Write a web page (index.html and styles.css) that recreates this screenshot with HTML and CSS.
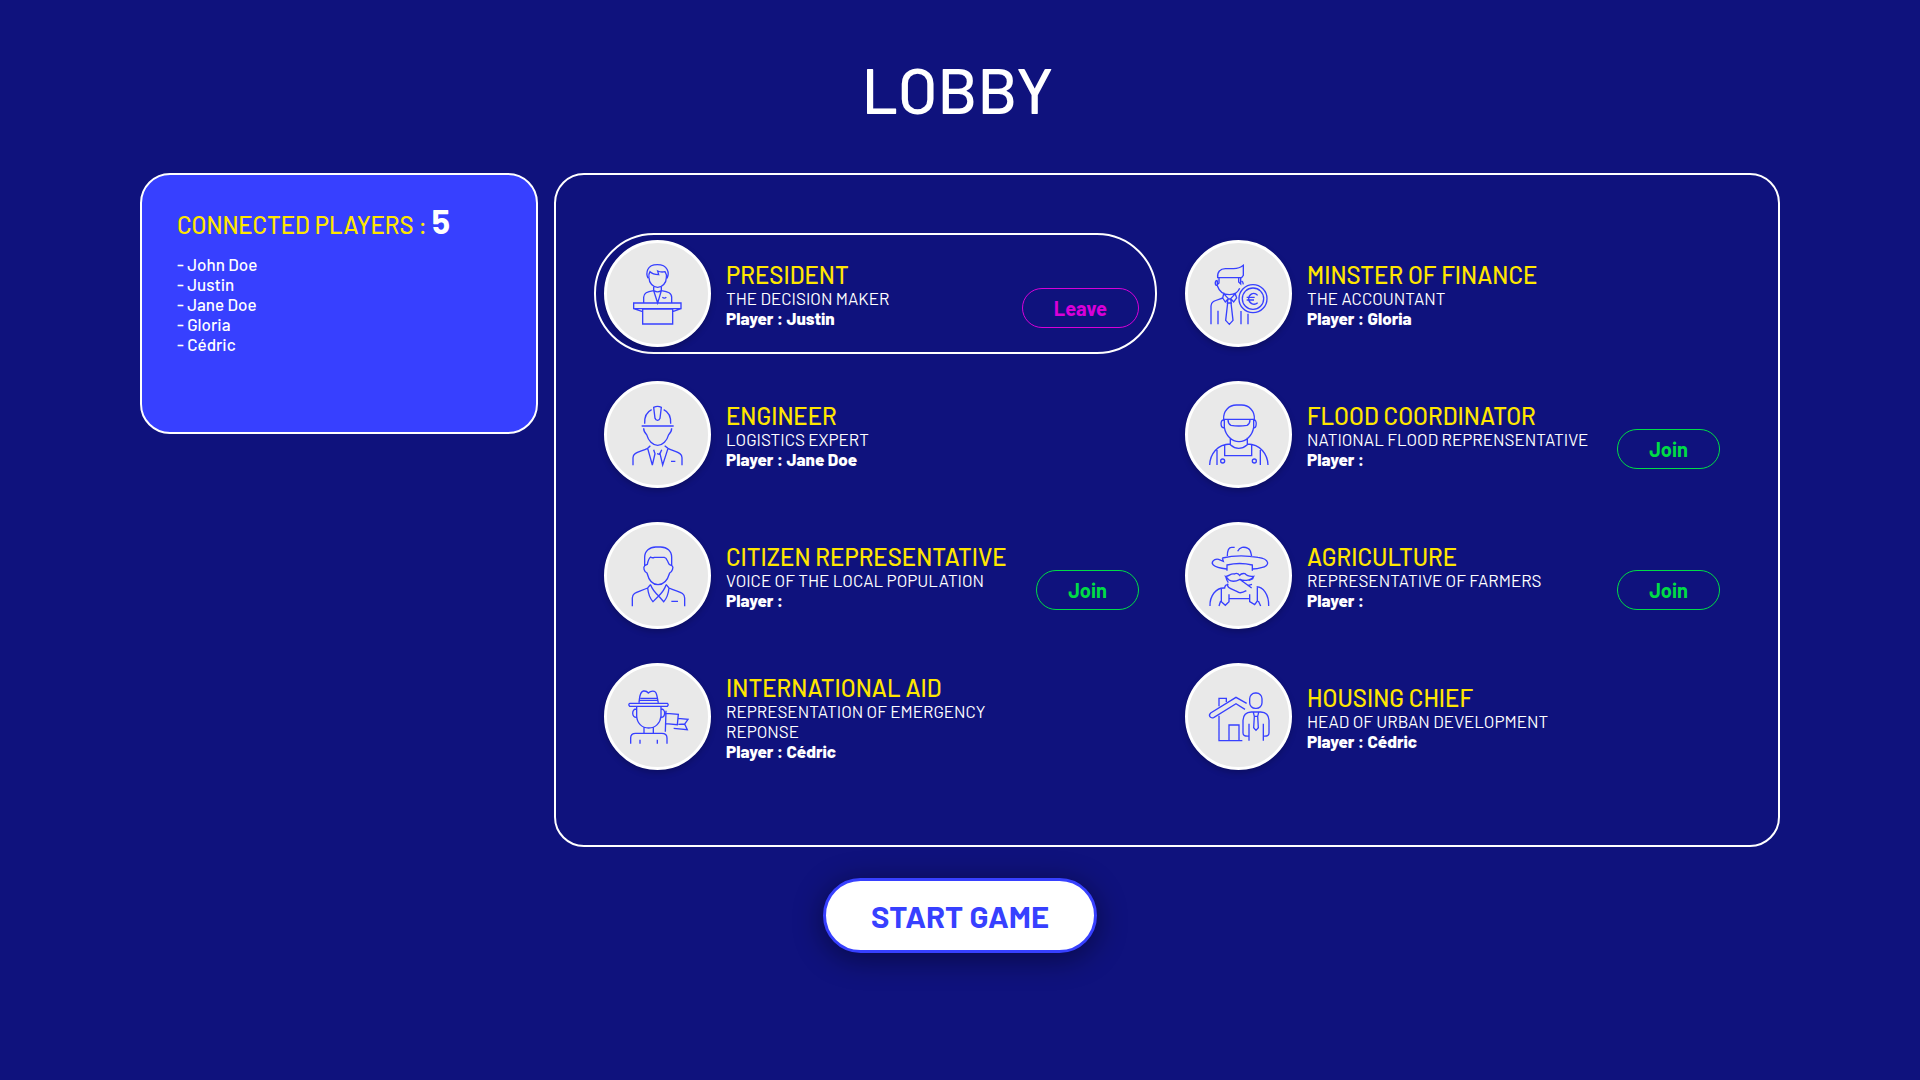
FILE: index.html
```html
<!DOCTYPE html>
<html lang="en">
<head>
<meta charset="utf-8">
<meta name="viewport" content="width=device-width, initial-scale=1">
<title>Lobby</title>
<link rel="stylesheet" href="styles.css">
</head>
<body>
<main class="page">
  <h1 class="page-title">LOBBY</h1>
  <div class="lobby">
    <aside class="players">
      <h2 class="players-title">CONNECTED PLAYERS : <strong class="players-count">5</strong></h2>
      <ul class="players-list">
        <li>- John Doe</li>
        <li>- Justin</li>
        <li>- Jane Doe</li>
        <li>- Gloria</li>
        <li>- Cédric</li>
      </ul>
    </aside>
    <section class="roles">
      <article class="role role-selected">
        <div class="avatar">
          <svg class="icon" viewBox="113 115 180 180" aria-hidden="true">
            <path d="M173 158C166 142 169 117 201 117S238 142 230 158M176 156C176 172 188 185 202 185S228 172 228 156C230 148 226 141 224 138Q212 141 202 136L205 147Q187 146 179 138Q174 146 176 156M190 184V195L202 232L213 195V184M190 195Q202 202 213 195M190 195C170 198 160 202 160 215V232M213 195C234 198 244 202 244 215V232M130 232H272V249H130ZM130 249L157 258M272 249L247 258M157 250H247V295H157ZM216 215Q222 220 228 215"/>
          </svg>
        </div>
        <div class="role-text">
          <h3 class="role-name">PRESIDENT</h3>
          <p>THE DECISION MAKER</p>
          <p class="role-player">Player : Justin</p>
        </div>
        <button class="pill pill-leave" type="button">Leave</button>
      </article>
      <article class="role">
        <div class="avatar">
          <svg class="icon" viewBox="116 115 180 180" aria-hidden="true">
            <path d="M142 156C140 139 150 129 165 129H190Q207 129 219 119V149L214 156ZM146 157V172L141 177V166M142 164C132 164 133 180 141 180C146 195 158 207 177 207C193 207 204 198 208 188M205 157V169L211 175V157M214 166Q218 168 219 176M161 201L157 217L165 229L173 220H182L190 229L199 217L194 203M162 206L174 219M193 206L181 219M157 217C137 224 122 226 122 241V296M143 255V296M212 256V296M233 264V296M173 220L171 232H183L181 220M172 232L166 284L177 296L188 284L182 232"/>
            <circle cx="248" cy="219" r="42"/><circle cx="248" cy="219" r="32"/>
            <path d="M262 209C250 196 235 207 235 219S250 242 262 231M229 215H253M229 223H251"/>
          </svg>
        </div>
        <div class="role-text">
          <h3 class="role-name">MINSTER OF FINANCE</h3>
          <p>THE ACCOUNTANT</p>
          <p class="role-player">Player : Gloria</p>
        </div>
      </article>
      <article class="role">
        <div class="avatar">
          <svg class="icon" viewBox="113 118 180 180" aria-hidden="true">
            <path d="M154 181H250M163 174C162 153 169 139 184 132M241 174C242 153 235 139 220 132M190 125Q202 119 213 125L209 158Q207 164 202 164Q196 164 194 158ZM160 188Q160 199 169 207C174 225 187 239 202 239S230 225 235 207Q244 199 244 188M180 240L172 248C145 260 128 261 128 276V299M223 240L233 248C259 260 275 261 275 276V299M172 248L186 298L194 264L190 252M233 248L217 298L209 264L214 252M200 264L206 266L209 262M242 287H255"/>
          </svg>
        </div>
        <div class="role-text">
          <h3 class="role-name">ENGINEER</h3>
          <p>LOGISTICS EXPERT</p>
          <p class="role-player">Player : Jane Doe</p>
        </div>
      </article>
      <article class="role">
        <div class="avatar">
          <svg class="icon" viewBox="116 118 180 180" aria-hidden="true">
            <path d="M160 161C158 135 177 118 198 118H214C235 118 254 135 252 161ZM173 162Q173 174 182 179Q205 183 230 179Q239 174 239 162M161 163C149 161 149 187 162 187M251 163C260 161 260 187 250 187M162 163V185C166 209 184 228 206 228S246 209 250 185V163M180 216V237Q205 259 231 237V216M180 235C141 235 119 266 118 298M231 235C270 235 292 266 293 298M163 239V270H244V239M140 253V298M270 253V298"/>
            <circle cx="157" cy="286" r="6"/><circle cx="252" cy="286" r="6"/>
          </svg>
        </div>
        <div class="role-text">
          <h3 class="role-name">FLOOD COORDINATOR</h3>
          <p>NATIONAL FLOOD REPRENSENTATIVE</p>
          <p class="role-player">Player :</p>
        </div>
        <button class="pill pill-join" type="button">Join</button>
      </article>
      <article class="role">
        <div class="avatar">
          <svg class="icon" viewBox="113 121 180 180" aria-hidden="true">
            <path d="M163 180V155C163 136 178 124 196 124H211C230 124 244 136 244 155V180M163 180L171 176C173 165 176 158 181 154Q186 158 192 155H222Q229 157 229 162C234 168 234 175 238 177L246 181M163 180C158 185 161 198 170 202C176 226 188 237 203 237S231 226 238 202C246 198 250 185 246 181M181 236L172 247C144 260 126 259 126 277V302M227 236L236 247C264 260 283 259 283 277V302M181 238Q187 254 205 271L188 288Q175 275 172 247M227 238Q222 254 205 271L220 288Q233 275 236 247M243 287H263"/>
          </svg>
        </div>
        <div class="role-text">
          <h3 class="role-name">CITIZEN REPRESENTATIVE</h3>
          <p>VOICE OF THE LOCAL POPULATION</p>
          <p class="role-player">Player :</p>
        </div>
        <button class="pill pill-join" type="button">Join</button>
      </article>
      <article class="role">
        <div class="avatar">
          <svg class="icon" viewBox="116 121 180 180" aria-hidden="true">
            <path d="M171 151C171 136 175 125 184 125H193M202 137C208 124 221 122 233 128C242 132 241 141 244 151M156 157Q205 145 263 155C297 159 302 181 273 186Q261 190 247 190M156 157L159 167L145 161C130 158 121 171 129 178C137 186 153 188 169 190M170 195V178Q208 169 246 178V195M166 212C176 213 180 202 192 205Q201 200 208 209Q213 202 224 204C230 212 240 213 250 212C240 228 217 225 209 221Q188 232 175 222ZM166 212Q169 225 174 231M250 212L247 219L236 224M210 222L244 247M232 240L245 236M173 234C166 248 189 251 205 260Q212 264 228 255M174 237Q164 236 163 247C137 245 118 271 119 301M153 250V288L165 299L176 288V266M146 301L151 286M261 243V286L253 297L238 288V266M177 279H238M259 243C278 244 296 266 295 301M264 286L271 301"/>
          </svg>
        </div>
        <div class="role-text">
          <h3 class="role-name">AGRICULTURE</h3>
          <p>REPRESENTATIVE OF FARMERS</p>
          <p class="role-player">Player :</p>
        </div>
        <button class="pill pill-join" type="button">Join</button>
      </article>
      <article class="role">
        <div class="avatar">
          <svg class="icon" viewBox="113 118 180 180" aria-hidden="true">
            <path d="M118 167H231Q236 171 231 176H118Q113 171 118 167M146 165C148 151 147 133 159 130Q169 129 174 136Q181 129 192 131C201 133 200 151 204 165M150 152H200M148 158H202M139 178V205C140 226 154 241 175 241S210 226 212 205V178M139 184C123 182 123 212 140 209M212 184C226 183 227 208 212 209M161 240V256M189 240V256M121 288V271Q121 257 136 257H214Q230 257 230 271V288M149 276V288M201 276V288M227 189L225 252M228 197L264 200L261 231L227 228M262 212L293 215L283 229L291 246L250 242M264 230L283 229"/>
          </svg>
        </div>
        <div class="role-text">
          <h3 class="role-name">INTERNATIONAL AID</h3>
          <p>REPRESENTATION OF EMERGENCY REPONSE</p>
          <p class="role-player">Player : Cédric</p>
        </div>
      </article>
      <article class="role">
        <div class="avatar">
          <svg class="icon" viewBox="116 118 180 180" aria-hidden="true">
            <path d="M146 176V152H168V163M229 167L197 149L121 196C113 204 120 213 130 210L197 168L224 185M146 204V279H216M176 279V232H206V279M236 228V279M279 228V279M236 265Q218 267 218 256V218Q219 194 243 193H271Q295 194 296 218V256Q296 267 279 265M249 194L252 206H262L265 194M252 206L250 240L257 248L264 240L262 206"/>
            <rect x="238" y="136" width="37" height="46" rx="17"/>
          </svg>
        </div>
        <div class="role-text">
          <h3 class="role-name">HOUSING CHIEF</h3>
          <p>HEAD OF URBAN DEVELOPMENT</p>
          <p class="role-player">Player : Cédric</p>
        </div>
      </article>
    </section>
  </div>
  <button class="start" type="button">START GAME</button>
</main>
</body>
</html>
```
FILE: styles.css
```css
* {
  box-sizing: border-box;
}

body {
  margin: 0;
  min-height: 100vh;
  background: #0f127d;
  color: #fff;
  font-family: Barlow, Roboto, sans-serif;
  font-size: 17px;
  line-height: 20px;
}

h1, h2, h3, p, ul {
  margin: 0;
  padding: 0;
  font-weight: 400;
}

button {
  font-family: inherit;
  cursor: pointer;
}

.page {
  display: flex;
  flex-direction: column;
  align-items: center;
  padding: 49px 140px;
}

.page-title {
  margin-right: 5px;
  font-size: 64px;
  font-weight: 500;
  line-height: 80px;
}

.lobby {
  display: grid;
  grid-template-columns: 398fr 1226fr;
  gap: 16px;
  align-items: start;
  width: 100%;
  margin-top: 44px;
}

.players {
  min-height: 261px;
  padding: 26px 35px;
  border: 2px solid #fff;
  border-radius: 30px;
  background: #3740ff;
}

.players-title {
  color: #ffe600;
  font-size: 24px;
  font-weight: 500;
  line-height: 40px;
}

.players-count {
  color: #fff;
  font-size: 34px;
  font-weight: 700;
}

.players-list {
  margin-top: 9px;
  font-weight: 500;
  list-style: none;
}

.roles {
  display: grid;
  grid-template-columns: 1fr 1fr;
  gap: 20px 18px;
  padding: 58px 40px 68px 38px;
  border: 2px solid #fff;
  border-radius: 30px;
}

.role {
  display: flex;
  align-items: center;
  min-height: 121px;
  padding: 5px 16px 5px 8px;
  border: 2px solid transparent;
  border-radius: 60px;
}

.role-selected {
  border-color: #fff;
}

.avatar {
  display: flex;
  flex: none;
  align-items: center;
  justify-content: center;
  width: 107px;
  height: 107px;
  border: 3px solid #fff;
  border-radius: 50%;
  background: #e9e9e9;
  box-shadow: 0 3px 6px rgba(0, 0, 0, 0.2);
}

.icon {
  width: 60px;
  height: 60px;
  overflow: visible;
  fill: none;
  stroke: #3740ff;
  stroke-width: 4;
}

.role-text {
  max-width: 300px;
  margin-left: 15px;
}

.role-name {
  padding-top: 2px;
  color: #ffe600;
  font-size: 24px;
  font-weight: 500;
  line-height: 26px;
}

.role-player {
  font-weight: 800;
}

.pill {
  align-self: flex-end;
  height: 40px;
  margin: 0 0 19px auto;
  padding: 0 31px;
  border: 1px solid;
  border-radius: 20px;
  background: transparent;
  font-size: 20px;
  font-weight: 700;
}

.pill-leave {
  color: #d800d8;
}

.pill-join {
  color: #00dc46;
}

.start {
  height: 75px;
  margin-top: 31px;
  padding: 0 45px;
  border: 3px solid #3740ff;
  border-radius: 38px;
  background: #fff;
  box-shadow: 0 5px 30px rgba(0, 0, 0, 0.45);
  color: #3740ff;
  font-size: 31px;
  font-weight: 700;
}
```
